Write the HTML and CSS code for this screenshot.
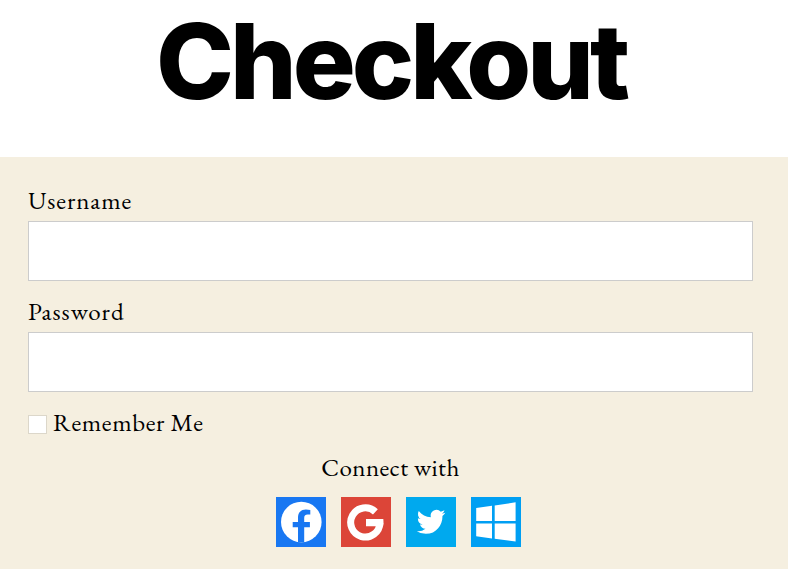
FILE: index.html
```html
<!DOCTYPE html>
<html lang="en">
<head>
<meta charset="utf-8">
<title>Checkout</title>
<link rel="stylesheet" href="styles.css">
</head>
<body>
<header class="page-header"><h1>Checkout</h1></header>
<main>
<form class="login">
<div class="field">
<label for="user">Username</label>
<input class="text-input" id="user" type="text">
</div>
<div class="field">
<label class="pass-label" for="pass">Password</label>
<input class="text-input" id="pass" type="password">
</div>
<label class="remember"><input class="check" type="checkbox"><span>Remember Me</span></label>
<p class="connect">Connect with</p>
<div class="providers">
<a class="provider facebook" aria-label="Facebook"><svg viewBox="0 0 50 50"><circle cx="25.3" cy="25" r="20.3" fill="#fff"/><path fill="#1877f2" d="M22 45V30.2h-5.3v-5.1H22v-4.2c0-5.4 2.9-8.4 7.9-8.4 1.5 0 3.2.2 4.4.5v4.5h-2.6c-2.6 0-3.5 1.5-3.5 3.4v4.2h5.7v5.1h-5.7V45z"/></svg></a>
<a class="provider google" aria-label="Google"><svg viewBox="0 0 50 50"><path fill="none" stroke="#fff" stroke-width="7" d="M34.4 14.9A14.6 14.6 0 1 0 38.9 25.8"/><path fill="#fff" d="M25 22h17.3c.3 2.4.3 4.9-.3 7.2H25z"/></svg></a>
<a class="provider twitter" aria-label="Twitter"><svg viewBox="0 0 50 50"><path fill="#fff" transform="translate(10.8 10.1) scale(1.19 1.23)" d="M23.95 4.57a10 10 0 0 1-2.82.77 4.96 4.96 0 0 0 2.16-2.72c-.95.55-2 .95-3.13 1.18a4.92 4.92 0 0 0-8.38 4.48C7.69 8.1 4.07 6.13 1.64 3.16a4.92 4.92 0 0 0 1.52 6.57 4.9 4.9 0 0 1-2.23-.61v.06a4.92 4.92 0 0 0 3.95 4.83 5 5 0 0 1-2.21.08 4.94 4.94 0 0 0 4.6 3.42A9.87 9.87 0 0 1 0 19.54a13.99 13.99 0 0 0 7.55 2.21c9.06 0 14-7.5 14-13.98 0-.21 0-.42-.02-.63a9.94 9.94 0 0 0 2.42-2.57z"/></svg></a>
<a class="provider windows" aria-label="Windows"><svg viewBox="0 0 50 50"><path fill="#fff" d="M5.2 11 21 8.8V24H5.2zM23.7 8.4 44.6 5.3V24H23.7zM5.2 26.5H21v15L5.2 39.2zM23.7 26.5h20.9v18.1l-20.9-2.9z"/></svg></a>
</div>
</form>
</main>
</body>
</html>
```
FILE: styles.css
```css
* { box-sizing: border-box; }
body {
  margin: 0;
  background: #f5efe0;
  color: #000;
  font-family: "EB Garamond", Garamond, "Liberation Serif", serif;
  font-size: 25px;
  letter-spacing: 0.9px;
}
.page-header {
  height: 157px;
  padding-right: 6px;
  background: #fff;
  text-align: center;
}
h1 {
  margin: 0;
  font: 800 105px/122px Inter, sans-serif;
  font-optical-sizing: none;
  letter-spacing: -4px;
}
.login { padding: 29px 35px 0 28px; }
.field { height: 111px; }
.field label { display: block; height: 35px; line-height: 28px; }
.field .pass-label { letter-spacing: 1px; }
.text-input {
  display: block;
  width: 100%;
  height: 60px;
  margin: 0;
  border: 1px solid #ccc;
  border-radius: 0;
  background: #fff;
}
.remember {
  display: flex;
  align-items: center;
  gap: 6px;
  height: 30px;
  line-height: 30px;
  letter-spacing: 0.6px;
}
.check {
  appearance: none;
  width: 19px;
  height: 19px;
  margin: 2px 0 0;
  border: 1px solid #dcd7ca;
  background: #fff;
}
.remember span { margin-top: -2px; }
.connect {
  height: 30px;
  margin: 15px 0 0;
  line-height: 28px;
  letter-spacing: 0.45px;
  text-align: center;
}
.providers { display: flex; justify-content: center; gap: 15px; margin: 14px 0 0 15px; }
.provider { width: 50px; height: 50px; }
.provider svg { display: block; width: 50px; height: 50px; }
.facebook { background: #1877f2; }
.google { background: #dc4538; }
.twitter { background: #00a9ee; }
.windows { background: #009ff3; }
```
